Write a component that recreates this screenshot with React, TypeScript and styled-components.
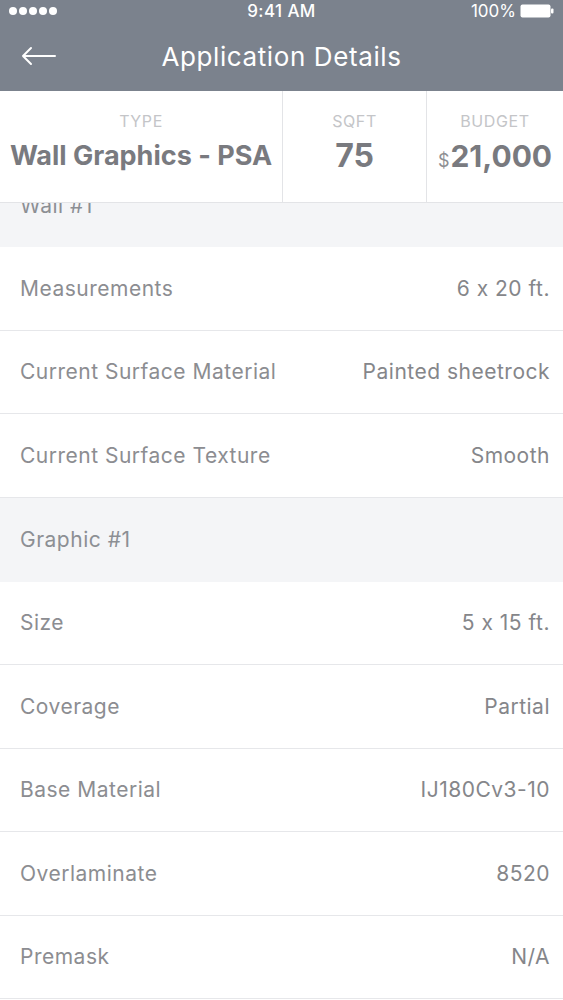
import styled, { createGlobalStyle } from "styled-components";

const GlobalStyle = createGlobalStyle`
  html, body {
    margin: 0;
    padding: 0;
    background: #ffffff;
  }
  body {
    font-family: Inter, "Liberation Sans", Arial, sans-serif;
    font-feature-settings: "calt" 0;
    -webkit-font-smoothing: antialiased;
  }
`;

interface Stat {
  label: string;
  value: string;
  prefix?: string;
  width: number;
  size: number;
}

interface DetailRow {
  label: string;
  value?: string;
  section?: boolean;
}

const stats: Stat[] = [
  { label: "TYPE", value: "Wall Graphics - PSA", width: 283, size: 27 },
  { label: "SQFT", value: "75", width: 144, size: 32 },
  { label: "BUDGET", value: "21,000", prefix: "$", width: 136, size: 30 },
];

const rows: DetailRow[] = [
  { label: "Wall #1", section: true },
  { label: "Measurements", value: "6 x 20 ft." },
  { label: "Current Surface Material", value: "Painted sheetrock" },
  { label: "Current Surface Texture", value: "Smooth" },
  { label: "Graphic #1", section: true },
  { label: "Size", value: "5 x 15 ft." },
  { label: "Coverage", value: "Partial" },
  { label: "Base Material", value: "IJ180Cv3-10" },
  { label: "Overlaminate", value: "8520" },
  { label: "Premask", value: "N/A" },
];

export default function App() {
  return (
    <>
      <GlobalStyle />
      <Screen>
        <Header>
          <StatusBar>
            <Signal>
              {[0, 1, 2, 3, 4].map((i) => (
                <Dot key={i} />
              ))}
            </Signal>
            <Clock>9:41 AM</Clock>
            <BatteryGroup>
              <span>100%</span>
              <BatteryIcon width="34" height="14" viewBox="0 0 34 14">
                <rect x="0.5" y="0.5" width="30" height="13" rx="2" fill="#ffffff" />
                <rect x="31" y="4.5" width="2.5" height="5" rx="1" fill="#ffffff" />
              </BatteryIcon>
            </BatteryGroup>
          </StatusBar>
          <NavBar>
            <BackButton aria-label="Back">
              <svg width="36" height="20" viewBox="0 0 36 20" fill="none">
                <path
                  d="M34 10H2M10 2L2 10L10 18"
                  stroke="#ffffff"
                  strokeWidth="2"
                  strokeLinecap="round"
                  strokeLinejoin="round"
                />
              </svg>
            </BackButton>
            <Title>Application Details</Title>
          </NavBar>
        </Header>

        <StatsPanel>
          {stats.map((s) => (
            <StatCell key={s.label} $width={s.width}>
              <StatLabel>{s.label}</StatLabel>
              <StatValue $size={s.size}>
                {s.prefix && <Prefix>{s.prefix}</Prefix>}
                {s.value}
              </StatValue>
            </StatCell>
          ))}
        </StatsPanel>

        <List>
          {rows.map((r) =>
            r.section ? (
              <SectionRow key={r.label}>{r.label}</SectionRow>
            ) : (
              <Row key={r.label}>
                <RowLabel>{r.label}</RowLabel>
                <RowValue>{r.value}</RowValue>
              </Row>
            )
          )}
        </List>
      </Screen>
    </>
  );
}

const Screen = styled.div`
  width: 563px;
  height: 1000px;
  overflow: hidden;
  display: flex;
  flex-direction: column;
  background: #ffffff;
`;

const Header = styled.header`
  background: #7b828d;
  color: #ffffff;
  display: flex;
  flex-direction: column;
  position: relative;
  z-index: 2;
`;

const StatusBar = styled.div`
  height: 22px;
  display: grid;
  grid-template-columns: 1fr auto 1fr;
  align-items: center;
  padding: 0 9px;
  font-size: 17px;
  font-weight: 500;
`;

const Signal = styled.div`
  display: flex;
  gap: 2px;
`;

const Dot = styled.span`
  width: 8px;
  height: 8px;
  border-radius: 50%;
  background: #ffffff;
`;

const Clock = styled.span`
  letter-spacing: 0.4px;
`;

const BatteryGroup = styled.div`
  display: flex;
  justify-content: flex-end;
  align-items: center;
  gap: 4px;
  font-weight: 400;
`;

const BatteryIcon = styled.svg`
  display: block;
`;

const NavBar = styled.div`
  height: 69px;
  display: flex;
  align-items: center;
  justify-content: center;
  position: relative;
`;

const BackButton = styled.button`
  position: absolute;
  left: 21px;
  top: 24px;
  padding: 0;
  border: none;
  background: none;
  display: flex;
`;

const Title = styled.h1`
  margin: 0;
  font-size: 26px;
  font-weight: 400;
  letter-spacing: 0.6px;
`;

const StatsPanel = styled.section`
  display: flex;
  height: 112px;
  background: #ffffff;
  border-bottom: 1px solid #e3e4e7;
  box-sizing: border-box;
  position: relative;
  z-index: 1;
`;

const StatCell = styled.div<{ $width: number }>`
  width: ${({ $width }) => $width}px;
  flex-shrink: 0;
  display: flex;
  flex-direction: column;
  align-items: center;
  padding-top: 20px;
  box-sizing: border-box;
  border-right: 1px solid #e3e4e7;

  &:last-child {
    border-right: none;
  }
`;

const StatLabel = styled.span`
  font-size: 16px;
  color: #c4c5c8;
  letter-spacing: 0.6px;
  line-height: 20px;
`;

const StatValue = styled.span<{ $size: number }>`
  font-size: ${({ $size }) => $size}px;
  font-weight: 700;
  color: #797a7f;
  line-height: 34px;
  margin-top: 8px;
  white-space: nowrap;
`;

const Prefix = styled.span`
  font-size: 18px;
  font-weight: 400;
  color: #8e8f93;
  margin-right: 1px;
`;

const List = styled.div`
  display: flex;
  flex-direction: column;
  margin-top: -40px;
`;

const SectionRow = styled.div`
  height: 84px;
  display: flex;
  align-items: center;
  padding-left: 20px;
  background: #f4f5f7;
  color: #8c8f94;
  font-size: 21px;
  letter-spacing: 0.5px;
  flex-shrink: 0;
  box-sizing: border-box;
`;

const Row = styled.div`
  height: 83.5px;
  flex-shrink: 0;
  display: flex;
  align-items: center;
  justify-content: space-between;
  padding: 0 13px 0 20px;
  border-bottom: 1px solid #e6e7ea;
  box-sizing: border-box;
  font-size: 21px;
  letter-spacing: 0.5px;
`;

const RowLabel = styled.span`
  color: #8c8d91;
`;

const RowValue = styled.span`
  color: #85868a;
`;
